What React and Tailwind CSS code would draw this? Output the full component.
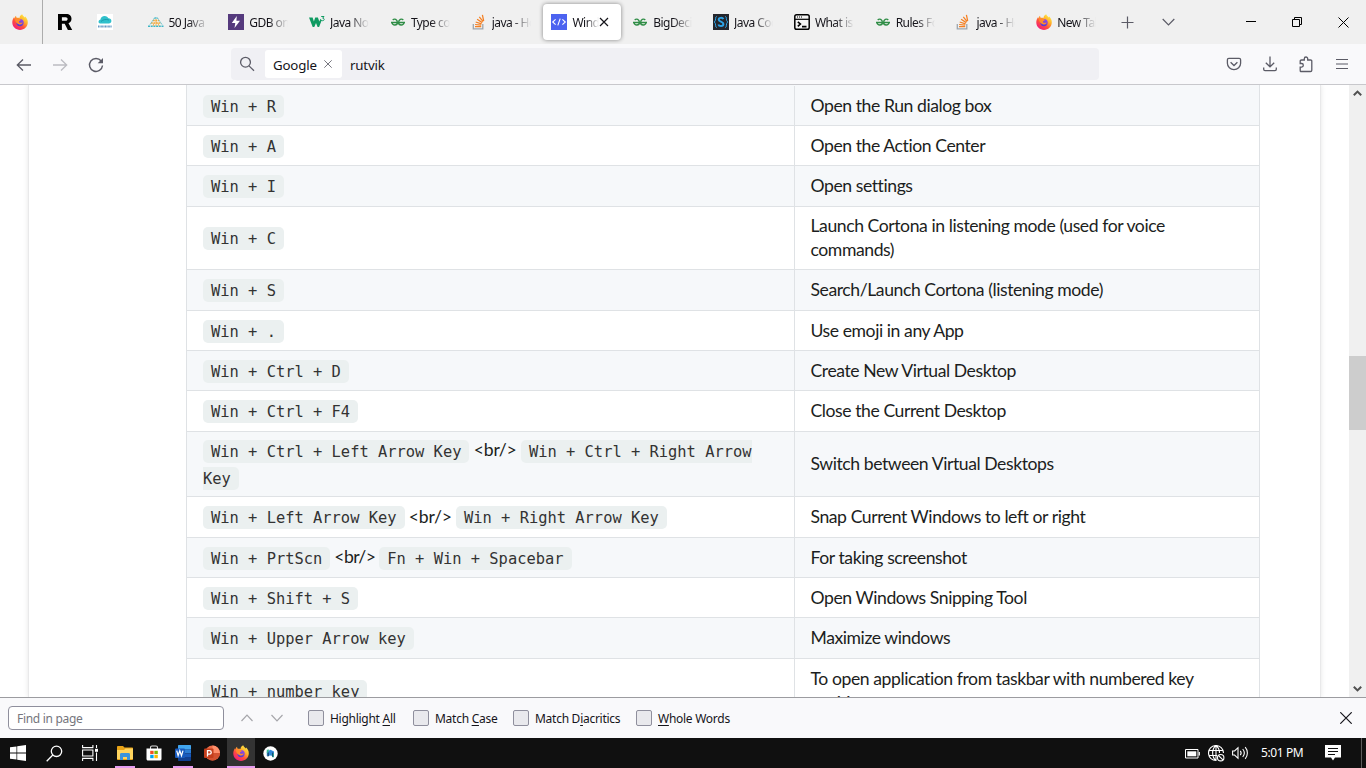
import React from "react";

function Firefox({ size = 16 }) {
  return (
    <svg width={size} height={size} viewBox="0 0 16 16">
      <defs>
        <linearGradient id="ffBody" x1="0.85" y1="0.05" x2="0.2" y2="0.95">
          <stop offset="0" stopColor="#fff04a" />
          <stop offset="0.35" stopColor="#ffb02a" />
          <stop offset="0.65" stopColor="#ff4f3c" />
          <stop offset="1" stopColor="#f0197e" />
        </linearGradient>
        <linearGradient id="ffGlobe" x1="0.7" y1="0" x2="0.3" y2="1">
          <stop offset="0" stopColor="#9a4be8" />
          <stop offset="1" stopColor="#4a3bd0" />
        </linearGradient>
      </defs>
      <path
        d="M10.2 0.2c0.4 1.6 1.7 2.2 2.6 3.3 0.3-0.2 0.3-0.7 0.1-1.2 1.7 1.4 3 3.6 2.9 6.2-0.1 4.2-3.6 7.4-7.8 7.4S0.300 12.700 0.300 8.500c0-1.900 0.500-3.700 1.700-5.200 0 0.500 0.100 0.900 0.300 1.200 0.200-1 0.900-2.100 1.800-2.700-0.100 0.800 0.200 1.600 0.900 2 0.900-0.100 1.600-0.100 2.500 0.200 0.100-1.700 1-3.100 2.700-3.800z"
        fill="url(#ffBody)"
      />
      <circle cx="8" cy="8.600" r="3.700" fill="url(#ffGlobe)" />
      <path d="M3 5.200c1.200-1 2.800-1.200 4-0.600 0.300 0.800 1.200 0.900 2 1.100-0.400 0.800-1.500 1-2 1.700-0.200 0.800 0.600 1.600 1.700 1.400 0.900-0.200 1.500-0.600 2.100-0.200-0.700 1.700-2.400 2.200-4 1.600C4.700 9.500 3 7.800 3 5.200z" fill="#ff8a2b" />
    </svg>
  );
}

function RLogo() {
  return (
    <svg width="16" height="16" viewBox="0 0 16 16">
      <path
        d="M1 0h8.300c3.200 0 5.200 1.900 5.200 4.800 0 2.200-1.100 3.700-3 4.400L15.200 16h-4.300L7.700 9.800H4.900V16H1zM4.900 3.200v3.600h3.800c1.200 0 1.900-0.700 1.900-1.800s-0.700-1.800-1.900-1.800z"
        fill="#000"
        fillRule="evenodd"
      />
    </svg>
  );
}

function Cloud() {
  return (
    <svg width="16" height="16" viewBox="0 0 16 16">
      <rect width="16" height="16" fill="#fff" />
      <path d="M3.200 9.500C1.800 9.400 1.300 8.400 1.600 7.300 1.900 6.200 3 5.800 3.500 5.500 3.700 3.200 5.500 2 7.500 2c2.200 0 3.300 1 3.900 2.300 1.800 0 3 1 3 2.700 0 1.500-1.100 2.500-2.600 2.500z" fill="#2fc0cb" />
      <path d="M4 7.500c2-2 5-2.500 8-1.500" stroke="#1593a5" strokeWidth="0.800" fill="none" />
      <path d="M1 12.500h14" stroke="#6699c4" strokeWidth="2" strokeDasharray="1 .4" />
    </svg>
  );
}

function Pyramid() {
  return (
    <svg width="16" height="16" viewBox="0 0 16 16">
      <g fill="none" strokeWidth="1.400">
        <path d="M6.500 4h3" stroke="#3fb6c6" strokeDasharray="1.400 .5" />
        <path d="M5 6.500h6M3 9h10" stroke="#f2a93b" strokeDasharray="1.800 .7" />
        <path d="M0 12.200h16" stroke="#3fb6c6" strokeDasharray="2 .7" />
        <path d="M2 10.500L6.500 4M14 10.500L9.500 4" stroke="#59bdc9" strokeWidth="1" strokeDasharray="1.600 .6" />
        <path d="M5 12l1-3M11 12l-1-3M8 12V5" stroke="#f2a93b" strokeWidth="0.800" />
      </g>
    </svg>
  );
}

function Bolt() {
  return (
    <svg width="16" height="16" viewBox="0 0 16 16">
      <rect width="16" height="16" fill="#553a7d" />
      <path d="M8.800 2L3.800 9h3.500L6.500 14l5.500-7.200H8.400z" fill="#fff" />
    </svg>
  );
}

function W3() {
  return (
    <svg width="16" height="16" viewBox="0 0 16 16">
      <path d="M0 3.500h3.600l1.300 4 1.300-4h2.700l1.400 4 1.200-2.700 1.200 1.400-2.600 6.900H8.600L7 9l-1.700 4.100H3.700z" fill="#109b62" />
      <path d="M12.200 2.500h2.800L13.700 4.200c2 0 2 2.500-.2 2.500-.8 0-1.300-.3-1.500-.7" strokeWidth="1" fill="none" stroke="#109b62" />
    </svg>
  );
}

function Geeks() {
  return (
    <svg width="16" height="16" viewBox="0 0 16 16" fill="none" stroke="#2f8d46" strokeWidth="1.400">
      <path d="M2.700 5.900c1.800-1.500 4.700-.6 4.700 2.600 0 3.300-4.900 3.500-5.400 0h12c-.5 3.500-5.400 3.300-5.400 0 0-3.200 2.900-4.100 4.700-2.600M1 8.500h14" />
    </svg>
  );
}

function Stack() {
  return (
    <svg width="16" height="16" viewBox="0 0 16 16" fill="none">
      <path d="M2.300 10v4.800h9.500V10" stroke="#9da5ad" strokeWidth="1.300" />
      <path d="M4 12.700h6.200M4.100 10.500l6.100.6M4.700 8l5.900 1.800M6.100 5.300l5.200 3.300M8.300 2.800l3.800 4.900M11.400.8l1.300 6.200" stroke="#f48024" strokeWidth="1.250" />
    </svg>
  );
}

function CodeTag() {
  return (
    <svg width="16" height="16" viewBox="0 0 16 16" fill="none" stroke="#fff">
      <rect width="16" height="16" fill="#4c63f0" stroke="none" />
      <path d="M4.600 5.400L1.700 8l2.900 2.600M11.400 5.400L14.300 8l-2.900 2.600M9.200 4.600L6.800 11.400" strokeWidth="1.100" />
    </svg>
  );
}

function SBraces() {
  return (
    <svg width="16" height="16" viewBox="0 0 16 16" fill="none" stroke="#2ea3e6">
      <rect width="16" height="16" fill="#25262c" stroke="none" />
      <path d="M3.700 2.300C2 2.300 3.300 7 1.300 8c2 1 .7 5.700 2.400 5.700M12.300 2.300C14 2.300 12.700 7 14.700 8c-2 1-.7 5.700-2.400 5.700" strokeWidth="1" />
      <path d="M10.400 5.200C9.600 3.300 5.600 3.400 5.700 5.700 5.800 8 10.400 7.400 10.400 10.100c0 2.600-4.400 2.600-5 .4" strokeWidth="2" />
    </svg>
  );
}

function Term() {
  return (
    <svg width="16" height="16" viewBox="0 0 16 16" fill="none" stroke="#000">
      <rect x="0.800" y="0.800" width="14.400" height="14.400" rx="1.800" strokeWidth="1.500" fill="#f4f4f4" />
      <path d="M1 5.300h14" strokeWidth="1.200" />
      <path d="M3 3h5" strokeDasharray="1 1" strokeWidth="1" />
      <path d="M3.800 7.800l2.600 2.200-2.600 2.300M8 12.600h4.500" strokeWidth="1.600" />
    </svg>
  );
}

const TABS = [
  [Pyramid, "50 Java P"],
  [Bolt, "GDB onl"],
  [W3, "Java Non"],
  [Geeks, "Type con"],
  [Stack, "java - Ho"],
  [CodeTag, "Windo", true],
  [Geeks, "BigDeci"],
  [SBraces, "Java Cod"],
  [Term, "What is"],
  [Geeks, "Rules Fo"],
  [Stack, "java - Ho"],
  [Firefox, "New Tab"],
];

function Tab({ icon: Icon, text, active }) {
  return (
    <div className="w-[80.8px] shrink-0 flex items-center px-[1.500px]">
      <div className={active ? "flex items-center w-[78px] h-[36px] rounded-[4px] bg-white shadow-[0_0_4px_rgba(0,0,0,0.45)] pl-2" : "flex items-center w-[78px] h-[36px] pl-2"}>
        <div className="w-4 h-4 shrink-0"><Icon /></div>
        <div className={(active ? "w-[27px] " : "w-[39px] ") + "ml-[5px] mt-[2px] overflow-hidden whitespace-nowrap text-[12px] tracking-[-0.550px] leading-[18px] text-[#15141a] [mask-image:linear-gradient(to_right,#000_50%,transparent)]"}>
          {text}
        </div>
        {active && (
          <svg width="10" height="10" viewBox="0 0 10 10" stroke="#15141a" strokeWidth="1.200" className="shrink-0">
            <path d="M1 1l8 8M9 1l-8 8" />
          </svg>
        )}
      </div>
    </div>
  );
}

function TabBar() {
  return (
    <div className="h-[44px] shrink-0 bg-[#f0f0f0] flex">
      <div className="w-[43px] border-r border-[#acacac] flex items-center pl-3 shrink-0"><Firefox /></div>
      <div className="w-[40px] flex items-center pl-[14px] shrink-0"><RLogo /></div>
      <div className="w-[55px] flex items-center pl-[14px] shrink-0"><Cloud /></div>
      {TABS.map(([icon, text, active], i) => (
        <Tab key={i} icon={icon} text={text} active={active} />
      ))}
      <div className="flex items-center ml-[13.500px] gap-[28px]">
        <svg width="13" height="13" viewBox="0 0 13 13" stroke="#5b5b66" strokeWidth="1.200"><path d="M6.500 .5v12M.5 6.500h12" /></svg>
        <svg width="13" height="8" viewBox="0 0 13 8" stroke="#5b5b66" strokeWidth="1.200" fill="none"><path d="M.7 1l5.800 5.800L12.300 1" /></svg>
      </div>
      <div className="flex items-center ml-auto mr-[17px] gap-[36px]">
        <svg width="10" height="11" viewBox="0 0 10 11" stroke="#000"><path d="M0 4.500h10" /></svg>
        <svg width="10" height="10" viewBox="0 0 10 10" stroke="#000" fill="none"><path d="M.5 2.500h7v7h-7zM2.500 2.500v-2h7v7h-2" /></svg>
        <svg width="11" height="11" viewBox="0 0 11 11" stroke="#000" strokeWidth="1"><path d="M.5 .5l10 10M10.500 .5l-10 10" /></svg>
      </div>
    </div>
  );
}

function NavBar() {
  return (
    <div className="h-[41px] shrink-0 bg-[#f9f9fb] border-b border-[#c8c8cc] flex items-center">
      <div className="flex items-center w-[231px] pl-4 gap-5 shrink-0 pt-px text-[#5b5b66]">
        <svg width="16" height="16" viewBox="0 0 16 16" fill="none" stroke="currentColor" strokeWidth="1.300"><path d="M15 8H1.500M7 2.500L1.300 8 7 13.500" /></svg>
        <svg width="16" height="16" viewBox="0 0 16 16" fill="none" stroke="#bcbcc2" strokeWidth="1.300"><path d="M1 8h13.500M9 2.500L14.700 8 9 13.500" /></svg>
        <svg width="16" height="16" viewBox="0 0 16 16" fill="none" stroke="currentColor" strokeWidth="1.400"><path d="M13.200 4A6.500 6.500 0 1 0 14.500 8.500" /><path d="M15 1v5.300H9.700z" fill="currentColor" stroke="none" /></svg>
      </div>
      <div className="w-[868px] h-[32px] rounded-[4px] bg-[#f0f0f4] flex items-center shrink-0 text-[13.300px] text-[#15141a]">
        <svg width="16" height="16" viewBox="0 0 16 16" fill="none" stroke="#5b5b66" strokeWidth="1.300" className="ml-2"><circle cx="6.500" cy="6.200" r="4.900" /><path d="M10 9.900l5 4.800" /></svg>
        <div className="ml-[10px] w-[77px] h-[28px] rounded-[3px] bg-white flex items-center pl-2 tracking-[-0.200px]">
          <span className="w-[45px] pt-[3px]">Google</span>
          <svg width="8" height="8" viewBox="0 0 8 8" stroke="#77777f" className="ml-[6px]"><path d="M.3 .3l7.400 7.400M7.700 .3L.3 7.700" /></svg>
        </div>
        <span className="ml-2 pt-[3px] tracking-[-0.200px]">rutvik</span>
      </div>
      <div className="flex items-center ml-auto mr-4 gap-5 text-[#5b5b66]">
        <svg width="16" height="16" viewBox="0 0 16 16" fill="none" stroke="currentColor" strokeWidth="1.300"><path d="M2.800 2.300h10.400c.9 0 1.400.6 1.400 1.400v3.500c0 3.600-3 6.500-6.600 6.500S1.400 10.800 1.400 7.200V3.700c0-.8.5-1.400 1.400-1.400z" /><path d="M4.600 6.300L8 9.500l3.400-3.200" /></svg>
        <svg width="16" height="16" viewBox="0 0 16 16" fill="none" stroke="currentColor" strokeWidth="1.300"><path d="M8 .5v10M3.800 6.700L8 10.800l4.200-4.100M1.700 11.500v1.800c0 .8.500 1.300 1.300 1.300h10c.8 0 1.300-.5 1.300-1.300v-1.800" /></svg>
        <svg width="16" height="17" viewBox="0 0 16 17" fill="none" stroke="currentColor" strokeWidth="1.300"><path d="M2.500 15.500h10c.8 0 1.300-.5 1.300-1.200V5.200c0-.7-.5-1.200-1.300-1.200h-2.800V2.700c0-2.300-3.400-2.300-3.400 0V4H3.500c-.8 0-1.300.5-1.300 1.200v2.300h1.400c2.300 0 2.300 3.600 0 3.600H2.200v3.200c0 .7 0 1.200.3 1.200z" /></svg>
        <svg width="16" height="16" viewBox="0 0 16 16" stroke="currentColor" strokeWidth="1.200"><path d="M2 3.500h12M2 8h12M2 12.500h12" /></svg>
      </div>
    </div>
  );
}

function K({ children }) {
  return (
    <code className="font-['DejaVu_Sans_Mono',monospace] text-[15.420px] text-[#333] bg-[#ebf0f0] rounded-[5px] px-2 py-[2.500px]">
      {children}
    </code>
  );
}

const Br = ({ tight }) => (
  <span className={tight ? "text-[#1c1e21] tracking-[-0.560px]" : "text-[#1c1e21] tracking-[-0.200px]"}>{" <br/> "}</span>
);

const ROWS = [
  ["h-[41px]", <K>Win + R</K>, "Open the Run dialog box"],
  ["h-[40px]", <K>Win + A</K>, "Open the Action Center"],
  ["h-[41px]", <K>Win + I</K>, "Open settings"],
  ["h-[63px]", <K>Win + C</K>, "Launch Cortona in listening mode (used for voice commands)"],
  ["h-[41px]", <K>Win + S</K>, "Search/Launch Cortona (listening mode)"],
  ["h-[40px]", <K>Win + .</K>, "Use emoji in any App"],
  ["h-[40px]", <K>Win + Ctrl + D</K>, "Create New Virtual Desktop"],
  ["h-[41px]", <K>Win + Ctrl + F4</K>, "Close the Current Desktop"],
  ["h-[65px]", <><K>Win + Ctrl + Left Arrow Key</K><Br /><K>Win + Ctrl + Right Arrow Key</K></>, "Switch between Virtual Desktops"],
  ["h-[41px]", <><K>Win + Left Arrow Key</K><Br /><K>Win + Right Arrow Key</K></>, "Snap Current Windows to left or right"],
  ["h-[40px]", <><K>Win + PrtScn</K><Br tight /><K>Fn + Win + Spacebar</K></>, "For taking screenshot"],
  ["h-[40px]", <K>Win + Shift + S</K>, "Open Windows Snipping Tool"],
  ["h-[41px]", <K>Win + Upper Arrow key</K>, "Maximize windows"],
  ["h-[65px]", <K>Win + number key</K>, "To open application from taskbar with numbered key position"],
];

function Content() {
  return (
    <div className="flex-1 min-h-0 flex overflow-hidden bg-white">
      <div className="flex-1 flex overflow-hidden">
        <div className="ml-[28px] w-[1293px] shrink-0 border-x border-[#e9e9ea] bg-white shadow-[0_0_5px_rgba(0,0,0,0.1)] pl-[157px]">
          <div className="w-[1074px] border-x border-[#dfe2e5] font-['Lato','Noto_Sans',sans-serif] text-[17.600px] text-[#1c1e21]">
            {ROWS.map(([h, left, right], i) => (
              <div key={i} className={h + " flex border-b border-[#dfe2e5] " + (i % 2 === 0 ? "bg-[#f6f8fa]" : "bg-white") + (i === 0 ? " pt-px" : "")}>
                <div className="w-[608px] shrink-0 border-r border-[#dfe2e5] flex items-center pl-4 pr-4">
                  <div className="leading-[25px]">{left}</div>
                </div>
                <div className="flex-1 flex items-center pl-[15.500px] pr-4">
                  <div className="leading-[24px] tracking-[-0.430px]">{right}</div>
                </div>
              </div>
            ))}
          </div>
        </div>
      </div>
      <div className="w-[17px] shrink-0 bg-[#f0f0f0] flex flex-col items-center">
        <svg width="17" height="17" viewBox="0 0 17 17" fill="none" stroke="#505050" strokeWidth="2"><path d="M4.800 10.300l3.700-3.700 3.700 3.700" /></svg>
        <div className="mt-[254px] w-full h-[74px] bg-[#cdcdcd]" />
        <svg width="17" height="17" viewBox="0 0 17 17" fill="none" stroke="#505050" strokeWidth="2" className="mt-auto"><path d="M4.800 6.700l3.700 3.700 3.700-3.700" /></svg>
      </div>
    </div>
  );
}

function Check({ w, children }) {
  return (
    <div className={w + " flex items-center shrink-0"}>
      <div className="w-4 h-4 border border-[#8f8f9d] rounded-[2px] bg-[#e9e9ed]" />
      <span className="ml-[6px] pt-[2px] whitespace-nowrap text-[12px] tracking-[-0.270px] text-[#15141a]">{children}</span>
    </div>
  );
}

function U({ children }) {
  return <span className="underline underline-offset-2">{children}</span>;
}

function FindBar() {
  return (
    <div className="h-[41px] shrink-0 border-t border-[#9c9ca0] bg-[#f9f9fb] flex items-center pl-2">
      <div className="w-[216px] h-[24px] border border-[#8f8f9d] rounded-[4px] bg-white flex items-center pl-2 pt-[2px] text-[12px] tracking-[-0.300px] text-[#75757c] shrink-0">Find in page</div>
      <svg width="12" height="8" viewBox="0 0 12 8" fill="none" stroke="#a6a6aa" strokeWidth="1.200" className="ml-[17px]"><path d="M.5 7L6 1.200 11.500 7" /></svg>
      <svg width="12" height="8" viewBox="0 0 12 8" fill="none" stroke="#a6a6aa" strokeWidth="1.200" className="ml-[18px] mr-[25px]"><path d="M.5 1L6 6.800 11.500 1" /></svg>
      <Check w="w-[105px]">Highlight <U>A</U>ll</Check>
      <Check w="w-[100px]">Match <U>C</U>ase</Check>
      <Check w="w-[123px]">Match D<U>i</U>acritics</Check>
      <Check w="w-[110px]"><U>W</U>hole Words</Check>
      <svg width="12" height="12" viewBox="0 0 12 12" stroke="#15141a" strokeWidth="1.200" className="ml-auto mr-[14px]"><path d="M.3 .3l11.400 11.400M11.700 .3L.3 11.700" /></svg>
    </div>
  );
}

function TaskBar() {
  return (
    <div className="h-[30px] shrink-0 bg-[#101010] flex items-stretch text-white">
      <div className="w-[36px] flex items-center pl-[10px]">
        <svg width="16" height="16" viewBox="0 0 16 16" fill="#fff"><path d="M0 2.300l6.500-.9v6.200H0zM7.200 1.300L16 0v7.600H7.200zM0 8.400h6.500v6.200L0 13.700zM7.200 8.400H16V16l-8.800-1.300z" /></svg>
      </div>
      <div className="w-[36px] flex items-center pl-[10px]">
        <svg width="17" height="17" viewBox="0 0 17 17" fill="none" stroke="#fff" strokeWidth="1.300"><circle cx="10.500" cy="6.300" r="5.200" /><path d="M6.800 10L.7 16.200" /></svg>
      </div>
      <div className="w-[36px] flex items-center pl-[10px]">
        <svg width="17" height="16" viewBox="0 0 17 16" fill="none" stroke="#fff" strokeWidth="1.100"><path d="M.6 0v2.600h10.300V0M.6 16v-2.600h10.300V16M.6 5h10.300v6H.6zM14.500 0v3M14.500 7.500V16" /><path d="M13 3.800h3v3h-3z" fill="#fff" stroke="none" /></svg>
      </div>
      <div className="w-[7px]" />
      <div className="w-[20px] flex items-center justify-center border-b-2 border-[#e59cf0] pt-[2px]">
        <svg width="16" height="14" viewBox="0 0 16 14"><path d="M0 1.200C0 .6.400 0 1 0h5l1.500 1.500H15c.6 0 1 .4 1 1V13c0 .6-.4 1-1 1H1c-.6 0-1-.4-1-1z" fill="#e8a317" /><path d="M0 4h7l1.500-1.500H16V13H0z" fill="#ffd45e" /><path d="M3 14V8.500C3 7.500 3.500 7 4.500 7h7c1 0 1.500.5 1.500 1.500V14h-3v-3H6v3z" fill="#3a94dd" /></svg>
      </div>
      <div className="w-[38px] flex items-center justify-center">
        <svg width="16" height="16" viewBox="0 0 16 16"><path d="M4.500 4V2.500c0-1 .5-1.500 1.500-1.500h4c1 0 1.500.5 1.500 1.500V4" stroke="#ddd" fill="none" strokeWidth="1.100" /><path d="M.5 3.500h15V14c0 .9-.6 1.500-1.500 1.500H2c-.9 0-1.500-.6-1.500-1.500z" fill="#fff" /><path d="M4.200 5.800h3.400v3.300H4.200z" fill="#f25022" /><path d="M8.400 5.800h3.400v3.300H8.400z" fill="#7fba00" /><path d="M4.200 9.900h3.400v3.300H4.200z" fill="#00a4ef" /><path d="M8.400 9.900h3.400v3.300H8.400z" fill="#ffb900" /></svg>
      </div>
      <div className="w-[20px] flex items-center justify-center border-b-2 border-[#e59cf0] pt-[2px]">
        <svg width="16" height="16" viewBox="0 0 16 16"><path d="M4 0h11c.6 0 1 .4 1 1v3.500H3V1c0-.6.4-1 1-1z" fill="#41a5ee" /><path d="M3 4.300h13v4H3z" fill="#2b7cd3" /><path d="M3 8.300h13v4H3z" fill="#185abd" /><path d="M3 12h13v3c0 .6-.4 1-1 1H4c-.6 0-1-.4-1-1z" fill="#103f91" /><rect y="3.500" width="10" height="9.500" rx="1" fill="#185abd" /><path d="M1.700 5.700l1.400 5 1.700-5 1.700 5 1.500-5" stroke="#fff" strokeWidth="1.200" fill="none" /></svg>
      </div>
      <div className="w-[34px] flex items-center justify-center pl-[4px]">
        <svg width="16" height="16" viewBox="0 0 16 16"><circle cx="8.500" cy="8" r="7.500" fill="#ed6c47" /><path d="M8.500 .5A7.500 7.500 0 0 1 16 8H8.500z" fill="#ff8f6b" /><path d="M1 8h15a7.500 7.500 0 0 1-15 0z" fill="#d35230" /><rect y="3.500" width="9.500" height="9.500" rx="1" fill="#c43e1c" /><path d="M3.500 11.500V5.700h1.900c2.500 0 2.500 3.500 0 3.500H3.500" stroke="#fff" strokeWidth="1.300" fill="none" /></svg>
      </div>
      <div className="w-[28px] flex items-center justify-center bg-[#333333] border-b-2 border-[#e59cf0] pt-[2px]"><Firefox /></div>
      <div className="w-[30px] flex items-center justify-center">
        <svg width="15" height="15" viewBox="0 0 15 15"><circle cx="7.500" cy="7.500" r="7.200" fill="#fff" /><path d="M3.800 5.500L7.500 3.800 11 5.500V10L7.500 9.500 3.800 10z" fill="#3187d8" /><path d="M3.800 3.700l2.500-.3L4.500 7.500l-.7-.5zM8.500 8l2.500-.8v4H9.300z" fill="#37b995" /><path d="M4.500 10.800V6.900l1.500-.6v3.800zM9 10.500V6.300l1.200.6v4z" fill="#174d78" /></svg>
      </div>
      <div className="ml-auto flex items-center shrink-0">
        <svg width="15" height="10" viewBox="0 0 15 10" fill="none" stroke="#fff" className="ml-px mt-px"><path d="M.5 .5h12.500v8.500H.5z" /><path d="M2.300 2.300h9v5h-9z" fill="#fff" stroke="none" /><path d="M14.300 3v3.500" strokeWidth="1.200" /></svg>
        <svg width="17" height="17" viewBox="0 0 17 17" fill="none" stroke="#fff" strokeWidth="1.100" className="ml-[8px]"><path d="M8.500 15.500A7.500 7.500 0 1 1 15.500 8M8 15.500C3.500 12 3.500 4 8 .5c2.500 2 3.500 4.500 3.500 7.500M8 .5v15M1 5.500h14M1 10.500h8" /><circle cx="12.700" cy="12.700" r="3.200" fill="#101010" /><path d="M10.500 10.500l4.400 4.400" /></svg>
        <svg width="18" height="14" viewBox="0 0 18 14" fill="none" stroke="#fff" strokeWidth="1.100" className="ml-[7px]"><path d="M.6 5h2L6 1.700v10.600L2.600 9h-2zM8.300 4.800c1 1.300 1 3.100 0 4.400M10.700 3c2 2.400 2 5.600 0 8M13.200 1.200c2.900 3.400 2.900 8.200 0 11.600" /></svg>
        <span className="ml-[11px] w-[43px] whitespace-nowrap text-[12px] tracking-[-0.400px]">5:01 PM</span>
        <svg width="16" height="16" viewBox="0 0 16 16" className="ml-[21px] mr-[20px]"><path d="M0 0h16v12.500h-6L8 15.500l-2-3H0z" fill="#fff" /><path d="M3 3.500h10M3 6.500h10M3 9.500h7" stroke="#101010" /></svg>
        <div className="w-[5px] h-full border-l border-[#5c5c5c]" />
      </div>
    </div>
  );
}

export default function App() {
  return (
    <div className="w-[1366px] h-[768px] flex flex-col overflow-hidden bg-white font-['Noto_Sans','Open_Sans',sans-serif]">
      <TabBar />
      <NavBar />
      <Content />
      <FindBar />
      <TaskBar />
    </div>
  );
}
